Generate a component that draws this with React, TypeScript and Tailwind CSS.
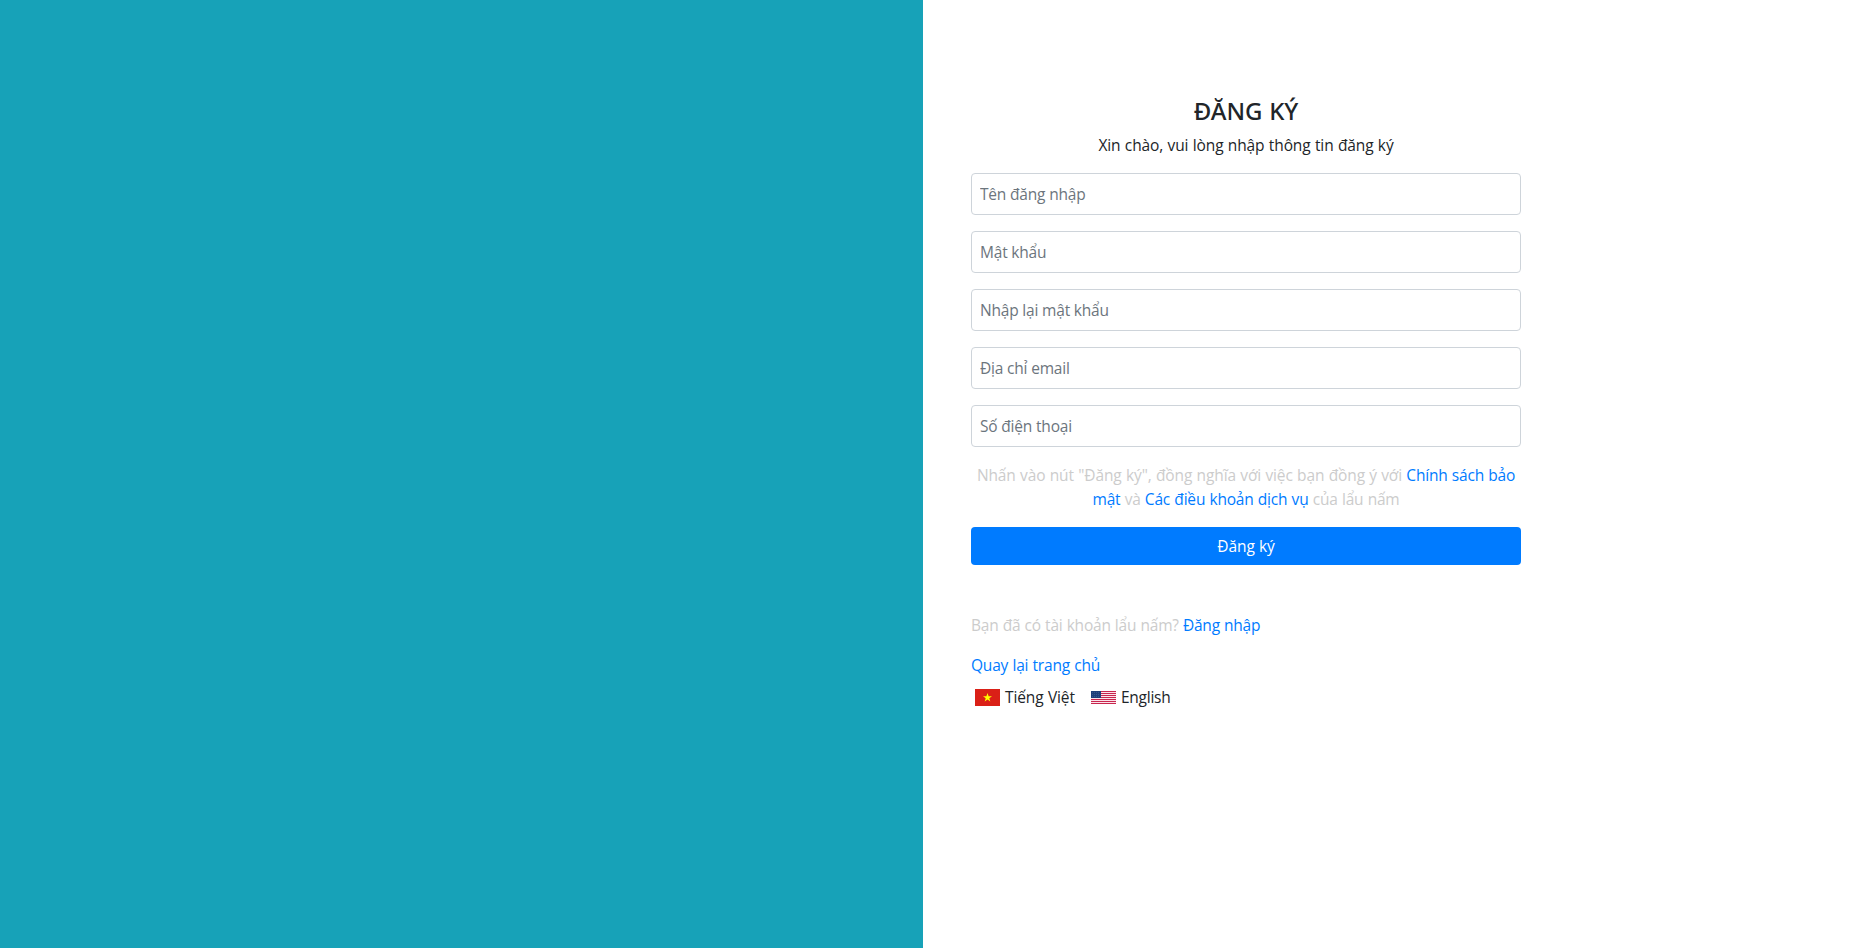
const fields = [
  { label: 'Tên đăng nhập', type: 'text' },
  { label: 'Mật khẩu', type: 'password' },
  { label: 'Nhập lại mật khẩu', type: 'password' },
  { label: 'Địa chỉ email', type: 'email' },
  { label: 'Số điện thoại', type: 'tel' },
];

function VietnamFlag() {
  return (
    <svg className="h-[17px] w-[25px] shrink-0" viewBox="0 0 25 17">
      <rect width="25" height="17" fill="#da2017" />
      <path d="M12.5 4l1.1 3.2h3.4l-2.700 2 1 3.300-2.800-2-2.800 2 1-3.300-2.700-2h3.400z" fill="#ffff00" />
    </svg>
  );
}

function UsaFlag() {
  return (
    <svg className="h-[13px] w-[25px] shrink-0" viewBox="0 0 25 13">
      <rect width="25" height="13" fill="#fbe3ea" />
      {[0, 2, 4, 6, 8, 10, 12].map((y) => (
        <rect key={y} y={y} width="25" height="1" fill="#c8264e" />
      ))}
      <rect width="10" height="7" fill="#1d3f79" />
      {[1, 3, 5].map((y) => (
        <path key={y} d={`M1 ${y + 0.5}h8`} stroke="#4a659a" strokeWidth="0.6" strokeDasharray="1 1" />
      ))}
    </svg>
  );
}

export default function App() {
  return (
    <div className="flex h-[948px] overflow-hidden bg-white font-['Open_Sans','Noto_Sans',sans-serif] text-[15.5px] leading-6 tracking-[-0.19px] [word-spacing:0.4px] text-[#212529]">
      <div className="w-[923px] shrink-0 bg-[#17a2b8]" />
      <div className="ml-12 w-[550px] pt-24">
        <h1 className="mb-2 text-center font-['Noto_Sans',sans-serif] text-2xl leading-[29px] font-medium tracking-normal">ĐĂNG KÝ</h1>
        <p className="mb-4 text-center tracking-[-0.1px]">Xin chào, vui lòng nhập thông tin đăng ký</p>
        <div className="flex flex-col gap-4">
          {fields.map((f) => (
            <input
              key={f.label}
              type={f.type}
              placeholder={f.label}
              className="h-[42px] w-full rounded border border-[#ced4da] px-2 tracking-[-0.19px] placeholder:text-[#6c757d]"
            />
          ))}
        </div>
        <p className="mt-4 text-center whitespace-nowrap text-[#cccccc]">
          <span className="tracking-[-0.11px]">Nhấn vào nút "Đăng ký", đồng nghĩa với việc bạn đồng ý với </span>
          <a className="text-[#007bff]">Chính sách bảo<br />mật</a> và{' '}
          <a className="text-[#007bff]">Các điều khoản dịch vụ</a> của lẩu nấm
        </p>
        <button className="mt-4 h-[38px] w-full rounded bg-[#007bff] tracking-[0px] text-white">Đăng ký</button>
        <p className="mt-12 tracking-[-0.22px] text-[#cccccc]">
          Bạn đã có tài khoản lẩu nấm? <a className="text-[#007bff]">Đăng nhập</a>
        </p>
        <p className="mt-4"><a className="text-[#007bff]">Quay lại trang chủ</a></p>
        <div className="mt-2 flex items-center pl-1">
          <VietnamFlag />
          <span className="w-[91px] pl-[5px] tracking-[-0.1px]">Tiếng Việt</span>
          <UsaFlag />
          <span className="ml-[5px] tracking-[-0.25px]">English</span>
        </div>
      </div>
    </div>
  );
}
